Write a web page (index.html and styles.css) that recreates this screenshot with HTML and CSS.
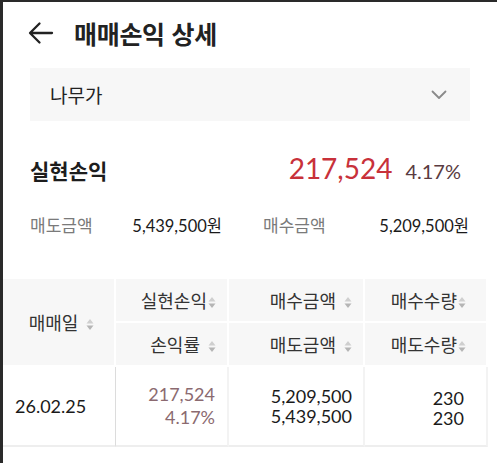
FILE: index.html
```html
<!DOCTYPE html>
<html lang="ko">
<head>
<meta charset="utf-8">
<link rel="stylesheet" href="styles.css">
</head>
<body>
<div class="screen">
  <header class="topbar">
    <svg class="back" width="26" height="24" viewBox="0 0 26 24"><path d="M24 12H2.5M11.5 2.5L2 12l9.5 9.5" fill="none" stroke="#222" stroke-width="2.3" stroke-linecap="round" stroke-linejoin="round"/></svg>
    <h1 class="title">매매손익 상세</h1>
  </header>

  <div class="select">
    <span class="select-text">나무가</span>
    <svg class="chev" width="16" height="10" viewBox="0 0 16 10"><path d="M1.5 1.5L8 8l6.5-6.5" fill="none" stroke="#8a8a8a" stroke-width="1.8" stroke-linecap="round" stroke-linejoin="round"/></svg>
  </div>

  <section class="summary">
    <div class="pl-row">
      <span class="pl-label">실현손익</span>
      <span class="pl-value"><span class="amt">217,524</span><span class="rate">4.17%</span></span>
    </div>
    <div class="amounts">
      <div class="pair"><span class="k">매도금액</span><span class="v">5,439,500원</span></div>
      <div class="pair"><span class="k">매수금액</span><span class="v">5,209,500원</span></div>
    </div>
  </section>

  <div class="table-wrap">
    <table class="grid">
      <colgroup><col class="w1"><col class="w2"><col class="w3"><col class="w4"><col class="w5"></colgroup>
      <thead>
        <tr>
          <th rowspan="2" class="center">매매일<svg class="sort sp" width="8" height="13" viewBox="0 0 8 13"><path d="M0.5 5.5L4 1l3.5 4.5z" fill="#cfcfcf"/><path d="M0.5 7.5L4 12l3.5-4.5z" fill="#b5b5b5"/></svg></th>
          <th>실현손익<svg class="sort" width="8" height="13" viewBox="0 0 8 13"><path d="M0.5 5.5L4 1l3.5 4.5z" fill="#cfcfcf"/><path d="M0.5 7.5L4 12l3.5-4.5z" fill="#b5b5b5"/></svg></th>
          <th>매수금액<svg class="sort sp" width="8" height="13" viewBox="0 0 8 13"><path d="M0.5 5.5L4 1l3.5 4.5z" fill="#cfcfcf"/><path d="M0.5 7.5L4 12l3.5-4.5z" fill="#b5b5b5"/></svg></th>
          <th class="c4">매수수량<svg class="sort" width="8" height="13" viewBox="0 0 8 13"><path d="M0.5 5.5L4 1l3.5 4.5z" fill="#cfcfcf"/><path d="M0.5 7.5L4 12l3.5-4.5z" fill="#b5b5b5"/></svg></th>
          <th class="c5"></th>
        </tr>
        <tr>
          <th>손익률<svg class="sort sp" width="8" height="13" viewBox="0 0 8 13"><path d="M0.5 5.5L4 1l3.5 4.5z" fill="#cfcfcf"/><path d="M0.5 7.5L4 12l3.5-4.5z" fill="#b5b5b5"/></svg></th>
          <th>매도금액<svg class="sort sp" width="8" height="13" viewBox="0 0 8 13"><path d="M0.5 5.5L4 1l3.5 4.5z" fill="#cfcfcf"/><path d="M0.5 7.5L4 12l3.5-4.5z" fill="#b5b5b5"/></svg></th>
          <th class="c4">매도수량<svg class="sort" width="8" height="13" viewBox="0 0 8 13"><path d="M0.5 5.5L4 1l3.5 4.5z" fill="#cfcfcf"/><path d="M0.5 7.5L4 12l3.5-4.5z" fill="#b5b5b5"/></svg></th>
          <th class="c5"></th>
        </tr>
      </thead>
      <tbody>
        <tr>
          <td class="date">26.02.25</td>
          <td class="num pl">217,524<br>4.17%</td>
          <td class="num amt2">5,209,500<br>5,439,500</td>
          <td class="num c4">230<br>230</td>
          <td class="c5"></td>
        </tr>
      </tbody>
    </table>
  </div>
</div>
</body>
</html>
```

FILE: styles.css
```css
* { box-sizing: border-box; }
html, body { margin: 0; padding: 0; background: #fff; }
body {
  font-family: Lato, "Noto Sans CJK KR", sans-serif;
  color: #1f1f1f;
  width: 497px;
  height: 463px;
  overflow: hidden;
  border-left: 3px solid #2a2a2a;
  border-top: 2px solid #2a2a2a;
}
.screen { width: 494px; }

.topbar {
  display: flex;
  align-items: center;
  height: 66px;
  padding: 0 0 4px 25px;
}
.back { display: block; }
.title {
  margin: 0 0 0 20px;
  font-family: "Noto Sans CJK KR", sans-serif;
  font-size: 25px;
  font-weight: 700;
  color: #222;
  letter-spacing: -0.3px;
}

.select {
  margin: 0 27px 0 27px;
  height: 53px;
  background: #f7f7f7;
  display: flex;
  align-items: center;
  justify-content: space-between;
  padding: 0 23px 0 20px;
}
.select-text {
  font-family: "Noto Sans CJK KR", sans-serif;
  font-size: 19px;
  color: #222;
}
.chev { display: block; }

.summary { padding: 30px 36px 0 27px; }
.pl-row {
  display: flex;
  align-items: baseline;
  justify-content: space-between;
  height: 36px;
}
.pl-label {
  font-family: "Noto Sans CJK KR", sans-serif;
  font-size: 21px;
  font-weight: 700;
  color: #1d1d1d;
}
.pl-value { display: flex; align-items: baseline; gap: 13px; }
.amt { font-size: 28px; color: #c8313a; }
.rate { font-size: 20px; color: #5a3b41; }

.amounts {
  display: grid;
  grid-template-columns: 192px 206px;
  column-gap: 41px;
  margin-top: 25px;
  height: 24px;
  align-items: center;
}
.pair { display: flex; justify-content: space-between; align-items: baseline; }
.k { font-size: 17px; color: #7a7a7a; }
.v { font-size: 16.5px; color: #1a1a1a; }

.table-wrap { margin-top: 43px; overflow: hidden; width: 494px; }
.grid {
  border-collapse: separate;
  border-spacing: 0;
  table-layout: fixed;
  width: 525px;
}
.w1 { width: 113px; }
.w2 { width: 113px; }
.w3 { width: 136px; }
.w4 { width: 123px; }
.w5 { width: 40px; }

.grid th {
  background: #f7f7f7;
  height: 44px;
  font-weight: 400;
  font-size: 18px;
  color: #333;
  text-align: right;
  padding: 0 11px 0 0;
  border-right: 2px solid #fff;
  border-bottom: 2px solid #fff;
  white-space: nowrap;
}
.grid th.center { text-align: center; padding: 0 4px 0 10px; }
.grid th.c4 { padding-right: 20px; }
.grid th.c5 { background: #fff; }
.sort { vertical-align: -1px; margin-left: 1px; }
.sort.sp { margin-left: 8px; }

.grid td {
  height: 80px;
  font-size: 18px;
  line-height: 20px;
  text-align: right;
  padding: 0 11px 0 0;
  border-right: 2px solid #f3f3f3;
  border-bottom: 2px solid #eeeeee;
  color: #1a1a1a;
}
.grid td.date {
  text-align: left;
  padding-left: 12px;
  border-right: 1px solid #dcdcdc;
}
.grid td.pl { color: #8b6a70; padding-right: 12px; line-height: 23px; }
.grid td.c4 { padding-right: 22px; line-height: 20px; padding-top: 3px; }
.grid td.c5 { border: none; }
```
